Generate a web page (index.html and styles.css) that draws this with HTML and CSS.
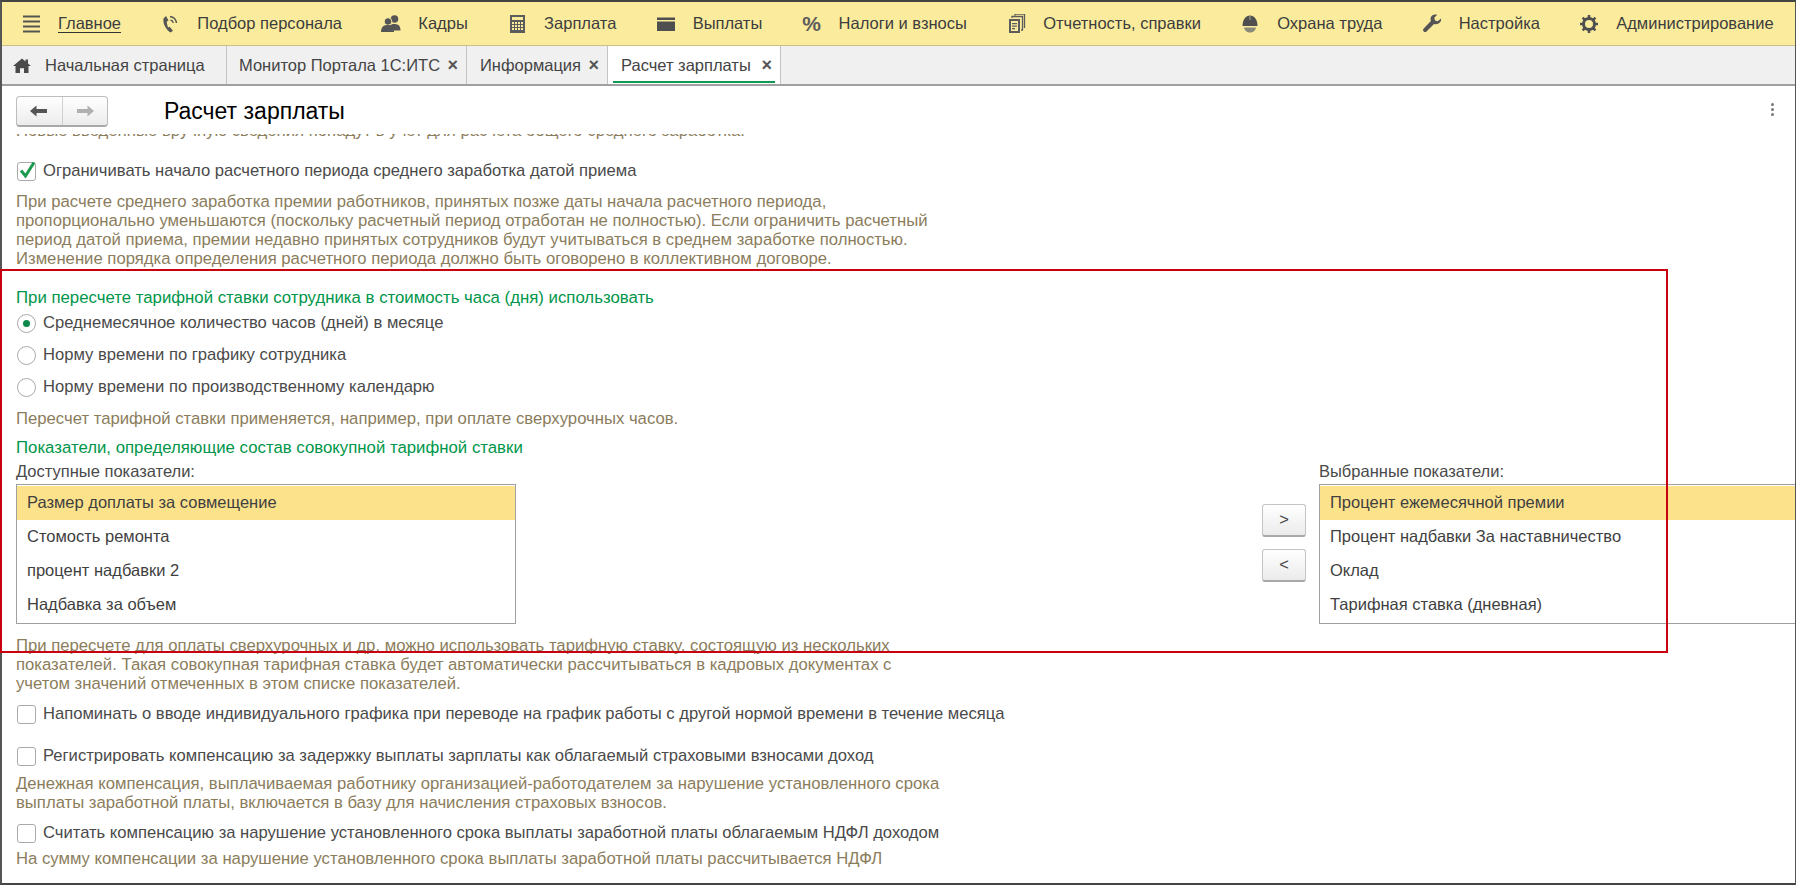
FILE: index.html
```html
<!DOCTYPE html>
<html lang="ru">
<head>
<meta charset="utf-8">
<title>Расчет зарплаты</title>
<link rel="stylesheet" href="styles.css">
</head>
<body>
<div class="window">
  <nav class="menu">
    <a class="menu-item"><svg class="mi" viewBox="0 0 20 20"><path d="M2 2.500h17M2 7.500h17M2 12.500h17M2 17.500h17" stroke="#555" stroke-width="2.200"/></svg><span class="main-link">Главное</span></a>
    <a class="menu-item"><svg class="mi" viewBox="0 0 20 20"><path d="M6 2 3.500 4.500c-.6 3 .4 6.500 2.500 9.500 1.300 2 3 3.500 4.500 4.500l2.500-1.800-3.300-4-1.700.8C7.300 11 6.800 9.300 6.800 7.600L8.500 6.500Z" fill="#555"/><path d="M10 2.500c3.500.5 6 3 6.500 6.500M10.500 6c1.500.3 2.500 1.300 2.800 2.800" fill="none" stroke="#555" stroke-width="1.500"/></svg><span>Подбор персонала</span></a>
    <a class="menu-item"><svg class="mi" viewBox="0 0 20 20"><circle cx="13.500" cy="5" r="3.800" fill="#555"/><path d="M9 11.500c1-2 7-2 9 0 1 1 1.500 3 1.500 5H12v-2Z" fill="#555"/><circle cx="7" cy="7.500" r="3.800" fill="#555" stroke="#fbec9d"/><path d="M0 18c0-3 1-5 2.500-6 2-1.300 6.500-1.300 8.500 0 1.500 1 2 3 2 6Z" fill="#555"/></svg><span>Кадры</span></a>
    <a class="menu-item"><svg class="mi" viewBox="0 0 20 20"><path fill-rule="evenodd" d="M3 1h15v18H3ZM5 3v3h11V3ZM5 8v2h2V8Zm3 0v2h2V8Zm3 0v2h2V8Zm3 0v2h2V8ZM5 11v2h2v-2Zm3 0v2h2v-2Zm3 0v2h2v-2Zm3 0v2h2v-2ZM5 14v2h2v-2Zm3 0v2h2v-2Zm3 0v2h2v-2Zm3 0v2h2v-2Z" fill="#5c5c5c"/></svg><span>Зарплата</span></a>
    <a class="menu-item"><svg class="mi" viewBox="0 0 20 20"><path d="M1 3.500h18v2.500H1ZM1 7.500h18v9.500H1Z" fill="#4f4f4f"/></svg><span>Выплаты</span></a>
    <a class="menu-item"><span class="mi percent">%</span><span>Налоги и взносы</span></a>
    <a class="menu-item"><svg class="mi" viewBox="0 0 20 20"><path fill-rule="evenodd" d="M3 5h11v14H3ZM5 7v10h7V7Zm1 2h5v1.300H6Zm0 2.500h5v1.300H6Zm0 2.500h3v1.300H6Z" fill="#5c5c5c"/><path d="M6 4V2.500h10.500V16H15M9 1.500V0h9.500v14" fill="none" stroke="#5c5c5c" stroke-width="1.300"/></svg><span>Отчетность, справки</span></a>
    <a class="menu-item"><svg class="mi" viewBox="0 0 20 20"><path d="M2.500 12C2.500 5.500 6 1.500 10 1.500s7.500 4 7.500 10.500Z" fill="#4f4f4f"/><path d="M10 2v4" stroke="#8a8a7a" stroke-width="1.500"/><path d="M4 13.500h12c-.5 3-3 5-6 5s-5.500-2-6-5Z" fill="#8a8a7a"/></svg><span>Охрана труда</span></a>
    <a class="menu-item"><svg class="mi" viewBox="0 0 20 20"><path d="M19 4.500 15.800 7.300 13 6.500 12.300 3.700 15.200.8C12.500-.2 9.500 1 8.700 3.700c-.3 1.200-.2 2.300.2 3.300L1.500 14.800c-1.500 1.700 1.200 4.300 3 2.700l7.500-7.600c1.300.5 2.800.5 4-.1 2.500-1 3.500-3.500 3-5.300Z" fill="#555"/></svg><span>Настройка</span></a>
    <a class="menu-item"><svg class="mi" viewBox="0 0 20 20"><circle cx="10" cy="10" r="5.500" fill="none" stroke="#4f4f4f" stroke-width="3"/><path d="M10 1v4M10 15v4M1 10h4M15 10h4M3.600 3.600l3 3M13.400 13.400l3 3M16.400 3.600l-3 3M6.600 13.400l-3 3" stroke="#4f4f4f" stroke-width="2.600"/></svg><span>Администрирование</span></a>
  </nav>

  <div class="tabs">
    <div class="tab tab-home"><svg class="home" viewBox="0 0 18 16" preserveAspectRatio="none"><path d="M9 .5 0 8.500h2.500V16H7v-5h4v5h4.500V8.500H18l-3-2.700V1.500h-2.500V3.600Z" fill="#4a4a4a"/></svg><span>Начальная страница</span></div>
    <div class="tab tab-monitor"><span>Монитор Портала 1С:ИТС</span><span class="x">×</span></div>
    <div class="tab tab-info"><span>Информация</span><span class="x">×</span></div>
    <div class="tab tab-active"><span>Расчет зарплаты</span><span class="x">×</span></div>
  </div>

  <header class="form-head">
    <div class="nav-btns">
      <button class="nav-btn"><svg width="20" height="12" viewBox="0 0 20 12"><path d="M1 6 7.500.5V4H18v4H7.500v3.500Z" fill="#555"/></svg></button>
      <button class="nav-btn"><svg width="20" height="12" viewBox="0 0 20 12"><path d="M19 6 12.500.5V4H2v4h10.500v3.500Z" fill="#b0b0b0"/></svg></button>
    </div>
    <h1 class="title">Расчет зарплаты</h1>
    <div class="more"><i></i><i></i><i></i></div>
  </header>

  <main class="scroller">
    <div class="content">
      <p class="hint cut">Новые введенные вручную сведения попадут в учет для расчета общего среднего заработка.</p>

      <label class="check first-check"><span class="box"><svg viewBox="0 0 20 20" width="20" height="20"><path d="M4 10.500 8.500 16 17 2.500" fill="none" stroke="#1c9a50" stroke-width="3"/></svg></span>Ограничивать начало расчетного периода среднего заработка датой приема</label>
      <p class="hint h-a">При расчете среднего заработка премии работников, принятых позже даты начала расчетного периода,<br>пропорционально уменьшаются (поскольку расчетный период отработан не полностью). Если ограничить расчетный<br>период датой приема, премии недавно принятых сотрудников будут учитываться в среднем заработке полностью.<br>Изменение порядка определения расчетного периода должно быть оговорено в коллективном договоре.</p>

      <h2 class="group g-a">При пересчете тарифной ставки сотрудника в стоимость часа (дня) использовать</h2>
      <label class="radio r-first"><span class="dot on"></span>Среднемесячное количество часов (дней) в месяце</label>
      <label class="radio"><span class="dot"></span>Норму времени по графику сотрудника</label>
      <label class="radio"><span class="dot"></span>Норму времени по производственному календарю</label>
      <p class="hint h-b">Пересчет тарифной ставки применяется, например, при оплате сверхурочных часов.</p>

      <h2 class="group g-b">Показатели, определяющие состав совокупной тарифной ставки</h2>
      <div class="pickers">
        <div class="picker picker-left">
          <div class="pick-label">Доступные показатели:</div>
          <ul class="list">
            <li class="sel">Размер доплаты за совмещение</li>
            <li>Стомость ремонта</li>
            <li>процент надбавки 2</li>
            <li>Надбавка за объем</li>
          </ul>
        </div>
        <div class="move">
          <button class="mv">&gt;</button>
          <button class="mv">&lt;</button>
        </div>
        <div class="picker picker-right">
          <div class="pick-label">Выбранные показатели:</div>
          <ul class="list">
            <li class="sel">Процент ежемесячной премии</li>
            <li>Процент надбавки За наставничество</li>
            <li>Оклад</li>
            <li>Тарифная ставка (дневная)</li>
          </ul>
        </div>
      </div>

      <p class="hint h-c">При пересчете для оплаты сверхурочных и др. можно использовать тарифную ставку, состоящую из нескольких<br>показателей. Такая совокупная тарифная ставка будет автоматически рассчитываться в кадровых документах с<br>учетом значений отмеченных в этом списке показателей.</p>

      <label class="check c-a"><span class="box"></span>Напоминать о вводе индивидуального графика при переводе на график работы с другой нормой времени в течение месяца</label>
      <label class="check c-b"><span class="box"></span>Регистрировать компенсацию за задержку выплаты зарплаты как облагаемый страховыми взносами доход</label>
      <p class="hint h-d">Денежная компенсация, выплачиваемая работнику организацией-работодателем за нарушение установленного срока<br>выплаты заработной платы, включается в базу для начисления страховых взносов.</p>
      <label class="check c-c"><span class="box"></span>Считать компенсацию за нарушение установленного срока выплаты заработной платы облагаемым НДФЛ доходом</label>
      <p class="hint h-e">На сумму компенсации за нарушение установленного срока выплаты заработной платы рассчитывается НДФЛ</p>
    </div>
  </main>

  <div class="red-frame"></div>
</div>
</body>
</html>
```
FILE: styles.css
```css
* { box-sizing: border-box; }
html, body { margin: 0; height: 100%; overflow: hidden; }
body { font-family: "Liberation Sans", Arial, sans-serif; font-size: 16.500px; color: #4a4a4a; background: #fff; }

.window { position: relative; width: 1796px; height: 885px; border-top: 2px solid #444; border-left: 2px solid #555; border-right: 1px solid #555; border-bottom: 2px solid #444; display: flex; flex-direction: column; }

.menu { height: 44px; flex: none; background: #fbec9d; border-bottom: 1px solid #c9c08a; display: flex; align-items: center; padding: 0 0 0 19px; gap: 39.300px; color: #3d3d3d; }
.menu-item { display: flex; align-items: center; gap: 17px; white-space: nowrap; }
.mi { width: 20px; height: 20px; flex: none; }
.percent { font-size: 21px; font-weight: bold; color: #5c5c5c; line-height: 20px; text-align: center; }
.main-link { border-bottom: 1px solid #333; line-height: 18px; }

.tabs { height: 40px; flex: none; background: #f0f0f0; border-bottom: 2px solid #a0a0a0; display: flex; align-items: stretch; color: #444; }
.tab { display: flex; align-items: center; border-right: 1px solid #c4c4c4; white-space: nowrap; position: relative; }
.tab-home { width: 225px; padding-left: 11px; gap: 14px; }
.home { width: 18px; height: 15px; }
.tab-monitor { width: 240px; padding-left: 12px; justify-content: space-between; padding-right: 8px; }
.tab-info { width: 141px; padding-left: 13px; justify-content: space-between; padding-right: 8px; }
.tab-active { width: 173px; padding-left: 13px; padding-right: 8px; justify-content: space-between; background: #fff; }
.tab-active::after { content: ""; position: absolute; left: 5px; right: 5px; bottom: 1px; height: 2px; background: #0f9a54; }
.x { font-size: 18px; line-height: 20px; font-weight: bold; color: #555; }

.form-head { height: 48px; flex: none; display: flex; align-items: center; padding: 2px 21px 0 14px; position: relative; background: #fff; z-index: 1; }
.nav-btns { display: flex; width: 92px; height: 31px; border: 1px solid #bdbdbd; border-bottom: 2px solid #a8a8a8; border-radius: 4px; background: linear-gradient(#fff, #ececec); }
.nav-btn { flex: 1; border: 0; background: transparent; padding: 0; display: flex; align-items: center; justify-content: center; }
.nav-btn + .nav-btn { border-left: 1px solid #cfcfcf; }
.title { margin: 0 0 0 56px; font-size: 23px; font-weight: normal; color: #000; flex: 1; }
.more { display: flex; flex-direction: column; gap: 2px; margin-top: -3px; }
.more i { width: 3px; height: 3px; background: #777; border-radius: 50%; display: block; }

.scroller { flex: 1; min-height: 0; overflow: hidden; position: relative; }
.content { padding: 0 0 0 14px; margin-top: -13px; width: 1850px; }

.hint { margin: 0; color: #8b7d5c; font-size: 16.700px; line-height: 19px; white-space: nowrap; }
.check, .radio { display: flex; align-items: center; gap: 7px; height: 20px; margin-left: 1px; color: #4a4a4a; font-size: 16.600px; white-space: nowrap; }
.box { width: 19px; height: 19px; border: 1px solid #aaa; border-radius: 3px; background: #fff; flex: none; position: relative; }
.box svg { position: absolute; left: -1px; top: -3px; }
.dot { width: 19px; height: 19px; border: 1px solid #aaa; border-radius: 50%; background: #fff; flex: none; position: relative; }
.dot.on::after { content: ""; position: absolute; left: 5px; top: 5px; width: 7px; height: 7px; border-radius: 50%; background: #0f8a4c; }
.group { margin: 0; font-size: 16.800px; font-weight: normal; color: #00964a; line-height: 20px; }

.first-check { margin-top: 21px; }
.h-a { margin-top: 11px; }
.g-a { margin-top: 20px; }
.r-first { margin-top: 5px; }
.radio + .radio { margin-top: 12px; }
.h-b { margin-top: 11.500px; }
.g-b { margin-top: 10px; }

.pickers { display: flex; align-items: flex-start; }
.picker-left { width: 500px; flex: none; }
.picker-right { width: 520px; flex: none; }
.pick-label { line-height: 20px; margin-top: 3px; height: 23px; }
.list { list-style: none; margin: 0; padding: 1px 0 0; height: 140px; border: 1px solid #a0a0a0; background: #fff; color: #3f3f3f; }
.list li { height: 34px; line-height: 32px; padding-left: 10px; }
.list .sel { background: #fde28c; }
.move { width: 803px; padding: 46px 0 0 746px; flex: none; display: flex; flex-direction: column; gap: 12px; }
.mv { width: 44px; height: 33px; border: 1px solid #c4c4c4; border-bottom: 2px solid #a8a8a8; border-radius: 3px; background: linear-gradient(#fff, #ebebeb); color: #444; font: 16.500px "Liberation Sans", Arial, sans-serif; padding: 0; }

.h-c { margin-top: 12.500px; }
.c-a { margin-top: 11px; }
.c-b { margin-top: 22px; }
.h-d { margin-top: 7.500px; }
.c-c { margin-top: 11.500px; }
.h-e { margin-top: 5.500px; }

.red-frame { position: absolute; left: -2px; top: 267px; width: 1668px; height: 384px; border: 2px solid #c9000f; pointer-events: none; z-index: 2; }
```
